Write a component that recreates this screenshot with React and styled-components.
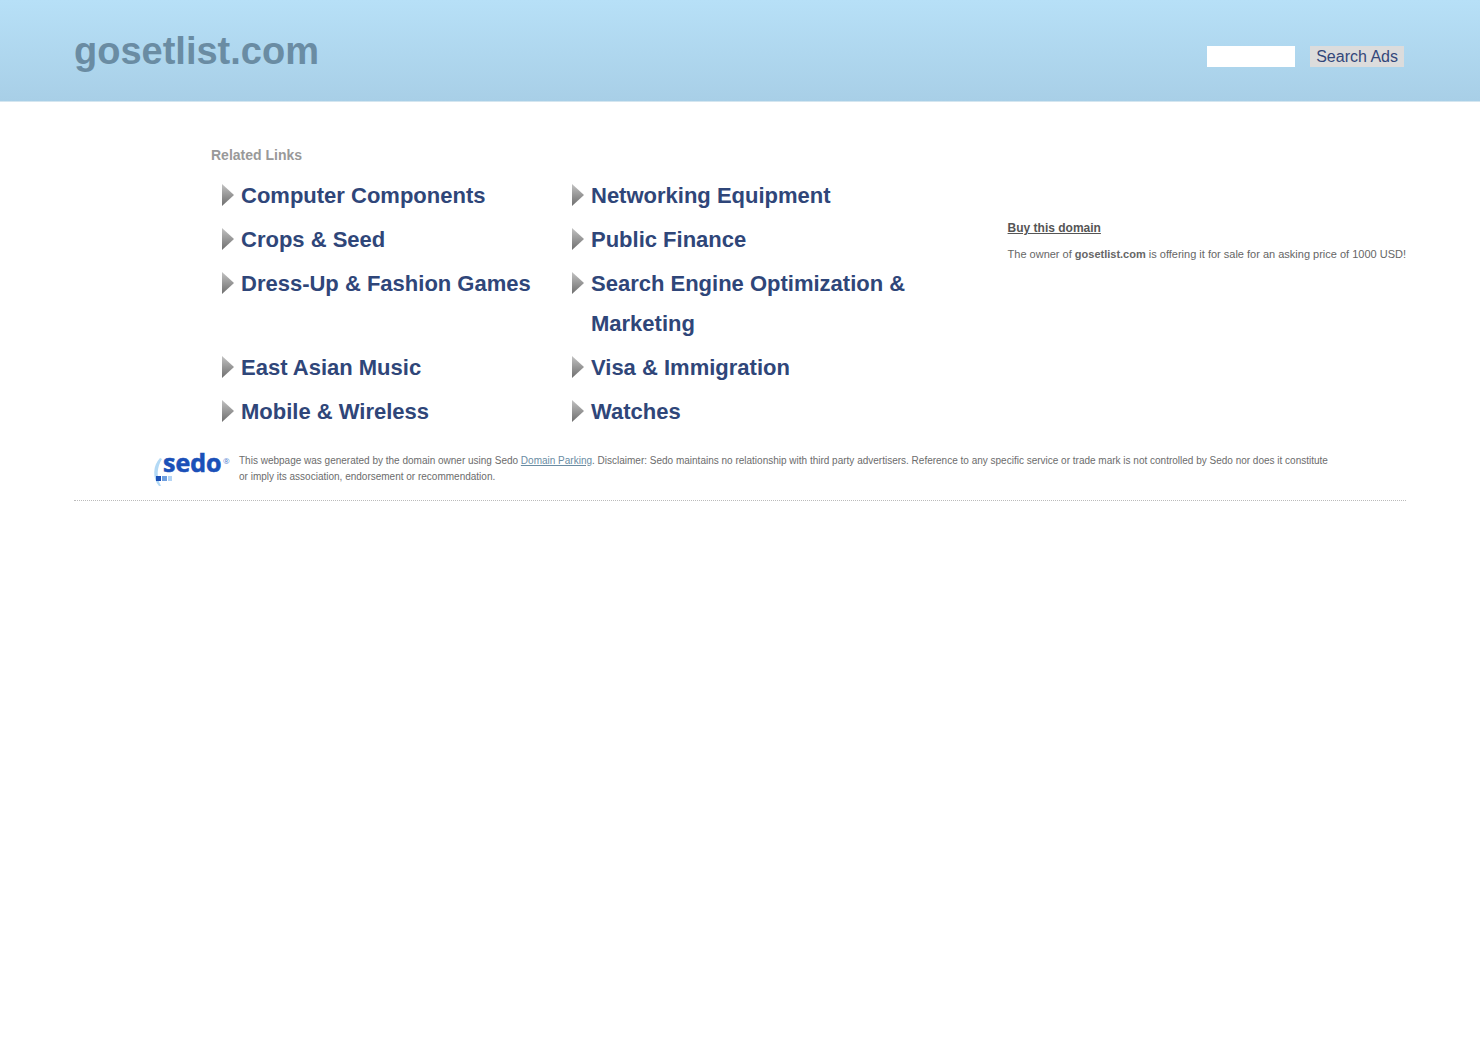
import React, {useState} from "react";
import styled, {createGlobalStyle} from "styled-components";

const links = [
    'Computer Components',
    'Networking Equipment',
    'Crops & Seed',
    'Public Finance',
    'Dress-Up & Fashion Games',
    'Search Engine Optimization & Marketing',
    'East Asian Music',
    'Visa & Immigration',
    'Mobile & Wireless',
    'Watches',
];

export default function App() {

    const [query, setQuery] = useState('');

    const submitHandler = (evt) => {
        evt.preventDefault();
    };

    return (
        <>
            <GlobalStyle/>
            <Header>
                <Title>gosetlist.com</Title>
                <SearchForm onSubmit={submitHandler}>
                    <SearchInput
                        type="text"
                        aria-label="Search Ads"
                        value={query}
                        onChange={(evt) => setQuery(evt.currentTarget.value)}
                    />
                    <SearchButton type="submit">Search Ads</SearchButton>
                </SearchForm>
            </Header>
            <Content>
                <Related>
                    <RelatedTitle>Related Links</RelatedTitle>
                    <LinkList>
                        {links.map((text) => (
                            <LinkItem key={text}>
                                <Arrow/>
                                <RelatedLink href="#">{text}</RelatedLink>
                            </LinkItem>
                        ))}
                    </LinkList>
                </Related>
                <Offer>
                    <BuyLink href="#">Buy this domain</BuyLink>
                    <OfferText>
                        The owner of <b>gosetlist.com</b> is offering it for sale for an asking price of 1000 USD!
                    </OfferText>
                </Offer>
            </Content>
            <Footer>
                <SedoLogo/>
                <Disclaimer>
                    This webpage was generated by the domain owner using Sedo <a href="#">Domain Parking</a>. Disclaimer:
                    Sedo maintains no relationship with third party advertisers. Reference to any specific service or
                    trade mark is not controlled by Sedo nor does it constitute or imply its association, endorsement or
                    recommendation.
                </Disclaimer>
            </Footer>
        </>
    );
};

function Arrow() {
    return (
        <ArrowIcon width="12" height="22" viewBox="0 0 12 22" aria-hidden="true">
            <defs>
                <linearGradient id="arrow" x1="0" y1="0" x2="0" y2="1">
                    <stop offset="0" stopColor="#c2c2c2"/>
                    <stop offset="1" stopColor="#6e6e6e"/>
                </linearGradient>
            </defs>
            <path d="M0 0L12 11L0 22Z" fill="url(#arrow)"/>
        </ArrowIcon>
    );
}

function SedoLogo() {
    return (
        <Logo width="78" height="36" viewBox="0 0 78 36" role="img" aria-label="sedo">
            <path d="M6 5C-1 12 -2 25 5 33L7 33C2 24 3 14 8 6Z" fill="#b3d9f5"/>
            <rect x="2" y="23" width="5" height="5" fill="#1b50b8"/>
            <rect x="8" y="23" width="5" height="5" fill="#6f9fe0"/>
            <rect x="14" y="23" width="4" height="5" fill="#b3d4f5"/>
            <text
                x="9"
                y="19"
                fontSize="25"
                fontWeight="700"
                fontFamily='"Open Sans", sans-serif'
                fill="#1b50b8"
                stroke="#1b50b8"
                strokeWidth="0.6"
            >
                sedo
            </text>
            <text x="69" y="11" fontSize="8" fontFamily='"Open Sans", sans-serif' fill="#4f80d0">®</text>
        </Logo>
    );
}

const GlobalStyle = createGlobalStyle`
    body {
        margin: 0;
        background: #fff;
        color: #666;
        font-family: "Liberation Sans", Arial, sans-serif;
    }
`;

const Header = styled.header`
    display: flex;
    justify-content: space-between;
    align-items: center;
    padding: 29px 5% 27px;
    border-bottom: 1px solid #d4e6f0;
    background: linear-gradient(#b7e0f7, #a8cfe7);
`;

const Title = styled.h1`
    margin: 0;
    color: #6a8ca3;
    font-size: 38px;
    line-height: 45px;
`;

const SearchForm = styled.form`
    display: flex;
    gap: 15px;
    padding: 10px 2px 0 0;
`;

const SearchInput = styled.input`
    box-sizing: border-box;
    width: 88px;
    height: 21px;
    padding: 0 4px;
    border: 0;
    background: #fff;
    font: 14px "Liberation Sans", Arial, sans-serif;
`;

const SearchButton = styled.button`
    height: 21px;
    padding: 0 6px;
    border: 0;
    background: #dcdcdc;
    color: #33477a;
    font: 16px/21px "Liberation Sans", Arial, sans-serif;
`;

const Content = styled.main`
    display: flex;
    justify-content: space-between;
    margin: 0 5%;
`;

const Related = styled.section`
    padding: 44px 0 0 137px;
`;

const RelatedTitle = styled.h2`
    margin: 0 0 12px;
    color: #999;
    font-size: 14px;
    line-height: 18px;
`;

const LinkList = styled.ul`
    display: grid;
    grid-template-columns: repeat(2, 350px);
    row-gap: 4px;
    margin: 0;
    padding: 0 0 0 11px;
    list-style: none;
`;

const LinkItem = styled.li`
    display: flex;
    align-items: flex-start;
    gap: 7px;
`;

const ArrowIcon = styled.svg`
    flex: none;
    margin-top: 8px;
`;

const RelatedLink = styled.a`
    color: #2f4679;
    font-size: 22px;
    font-weight: bold;
    line-height: 40px;
    text-decoration: none;
`;

const Offer = styled.aside`
    padding-top: 117px;
    font-size: 11px;
    line-height: 18px;
    white-space: nowrap;
`;

const BuyLink = styled.a`
    color: #555;
    font-size: 12px;
    font-weight: bold;
`;

const OfferText = styled.p`
    margin: 8px 0 0;
`;

const Footer = styled.footer`
    display: flex;
    margin: 21px 5% 0;
    padding: 0 70px 11px 80px;
    border-bottom: 1px dotted #bbb;
`;

const Logo = styled.svg`
    flex: none;
    margin-right: 7px;
    overflow: visible;
`;

const Disclaimer = styled.p`
    margin: 0;
    color: #6c6c6c;
    font-size: 10px;
    line-height: 16px;

    a {
        color: #6a8ca3;
    }
`;
